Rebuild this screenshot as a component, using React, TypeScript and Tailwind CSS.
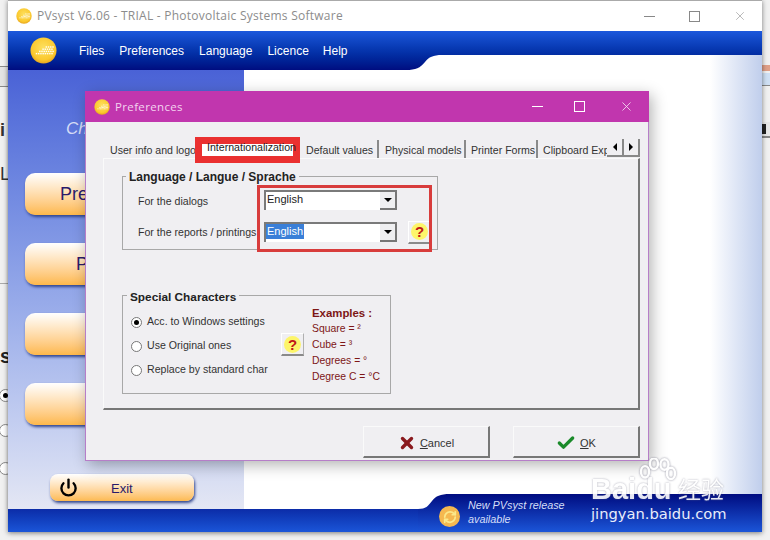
import React from "react";
import { Check, Power, RefreshCw, X } from "lucide-react";

function Logo({ size, id }: { size: number; id: string }) {
  const dots: React.ReactNode[] = [];
  for (let r = 0; r < 4; r++) {
    for (let c = 0; c < 8 - r * 1.5; c++) {
      dots.push(<rect key={`${r}-${c}`} x={6 + c * 2.3 + r * 3.4} y={16.5 - r * 2.3} width="1.5" height="1.5" fill="#fff" opacity="0.95" />);
    }
  }
  return (
    <svg width={size} height={size} viewBox="0 0 28 28" className="shrink-0">
      <defs>
        <radialGradient id={id} cx="0.5" cy="0.4" r="0.65">
          <stop offset="0" stopColor="#fde060" />
          <stop offset="0.7" stopColor="#fbc92e" />
          <stop offset="1" stopColor="#e09a18" />
        </radialGradient>
      </defs>
      <circle cx="14" cy="14" r="13.5" fill={`url(#${id})`} />
      {dots}
    </svg>
  );
}

function Help({ className }: { className: string }) {
  return (
    <div className={`flex items-center justify-center bg-[#f0eff2] border-t border-l border-white border-b-2 border-r border-b-[#8a8a8a] border-r-[#b0b0b0] ${className}`}>
      <div className="w-[17px] h-[17px] rounded-full bg-[#fdf56a] flex items-center justify-center text-[15px] leading-none font-bold text-[#c01818] font-['Liberation_Sans',sans-serif]">?</div>
    </div>
  );
}

function Combo({ selected }: { selected?: boolean }) {
  return (
    <div className="w-[133px] h-[20px] bg-white border-t-2 border-l-2 border-[#7a7a7a] flex">
      <div className="flex-1 flex items-start">
        <span className={`text-[11px] leading-[15px] px-[1px] ${selected ? "bg-[#3a7fd8] text-white" : "text-[#222]"}`}>English</span>
      </div>
      <div className="w-[17px] bg-[#efeff1] border-b-2 border-r-2 border-[#777] flex items-center justify-center">
        <div className="w-0 h-0 border-l-[4px] border-r-[4px] border-t-[4px] border-l-transparent border-r-transparent border-t-black" />
      </div>
    </div>
  );
}

function Radio({ label, on }: { label: string; on?: boolean }) {
  return (
    <div className="flex items-center h-[24px] w-[137px] whitespace-nowrap text-[10.6px] text-[#333]">
      <div className="w-[11px] h-[11px] rounded-full border border-[#777] bg-white flex items-center justify-center mr-[5px] shrink-0">
        {on && <div className="w-[5px] h-[5px] rounded-full bg-black" />}
      </div>
      {label}
    </div>
  );
}

function Big({ label, pad }: { label: string; pad: string }) {
  return (
    <div className={`h-[42px] w-[194px] rounded-[10px] bg-gradient-to-b from-white to-[#fdb84a] shadow-[1px_2px_3px_#31468f] text-[18px] text-[#2a1a6a] ${pad} flex items-center`}>
      {label}
    </div>
  );
}

function Tab({ label, w }: { label: string; w: string }) {
  return (
    <div className={`${w} h-[18px] pt-[3px] shrink-0 flex items-center whitespace-nowrap text-[10.6px] text-[#333]`}>
      {label}
    </div>
  );
}

function DlgBtn({ children }: { children: React.ReactNode }) {
  return (
    <div className="w-[127px] h-[32px] border-t border-l border-[#fafafa] border-b-2 border-r-2 border-b-[#777] border-r-[#777] flex items-center justify-center gap-[4px] text-[11px] text-[#333] pt-[3px]">
      {children}
    </div>
  );
}

export default function App() {
  return (
    <div className="relative w-[770px] h-[540px] overflow-hidden bg-[#f1f1f1] font-['Liberation_Sans',sans-serif]">
      {/* fragments of the windows behind */}
      <div className="absolute left-0 top-[66px] w-[8px] h-[21px] border-y border-[#8a8a8a] bg-[#e4e4e4]" />
      <div className="absolute left-0 top-[117px] text-[18px] font-bold text-[#333]">i</div>
      <div className="absolute left-0 top-[161px] text-[18px] text-[#333]">L</div>
      <div className="absolute left-0 top-[283px] w-[8px] h-px bg-[#aaa]" />
      <div className="absolute left-0 top-[341px] text-[20px] font-bold text-[#222]">s</div>
      <div className="absolute left-[-1px] top-[389px] w-[13px] h-[13px] rounded-full border border-[#888] bg-white flex items-center justify-center"><div className="w-[5px] h-[5px] rounded-full bg-black" /></div>
      <div className="absolute left-[-1px] top-[424px] w-[13px] h-[13px] rounded-full border border-[#888] bg-white" />
      <div className="absolute left-[-1px] top-[462px] w-[13px] h-[13px] rounded-full border border-[#888] bg-white" />
      <div className="absolute right-0 top-[65px] w-[8px] h-[6px] bg-[#e0a088]" />
      <div className="absolute right-0 top-[73px] w-[8px] h-[13px] bg-[#cfe0f4] border-b border-[#888]" />
      <div className="absolute right-0 top-[122px] w-[8px] h-[16px] bg-[#e8e8e8] border-b-2 border-[#888]"><div className="w-[4px] h-[10px] bg-[#222] mt-[2px]" /></div>

      {/* main window */}
      <div className="absolute left-[8px] top-0 w-[754px] h-[532px] flex flex-col bg-white border-t border-[#aaa] shadow-[0_1px_5px_rgba(0,0,0,0.5)]">
        <div className="h-[30px] flex items-center pl-[8px] shrink-0">
          <Logo size={16} id="l1" />
          <span className="ml-[5px] text-[12px] tracking-[0.25px] text-[#8c8c8c] font-['Open_Sans',sans-serif] whitespace-nowrap">PVsyst V6.06 - TRIAL - Photovoltaic Systems Software</span>
          <div className="ml-auto flex items-center gap-[34px] pr-[16px] text-[#888]">
            <div className="w-[11px] h-px bg-[#888]" />
            <div className="w-[11px] h-[11px] border border-[#888]" />
            <X size={14} strokeWidth={1} className="-mx-[1px]" />
          </div>
        </div>
        <div className="relative h-[39px] shrink-0 bg-gradient-to-b from-[#1c58dc] to-[#000c80] flex items-center pl-[22px] text-white text-[12px]">
          <Logo size={27} id="l2" />
          <span className="ml-[22px] mr-[15px]">Files</span>
          <span className="mr-[15px]">Preferences</span>
          <span className="mr-[15px]">Language</span>
          <span className="mr-[14px]">Licence</span>
          <span>Help</span>
          <svg className="absolute right-0 bottom-0" width="356" height="15" viewBox="0 0 356 15" preserveAspectRatio="none">
            <defs>
              <linearGradient id="cut" x1="0" y1="0" x2="1" y2="0">
                <stop offset="0" stopColor="#fff" />
                <stop offset="0.854" stopColor="#fff" />
                <stop offset="1" stopColor="#c0ceec" />
              </linearGradient>
            </defs>
            <path d="M0 15 C10 15 14 13 19 7 C23 2 27 0 36 0 L356 0 L356 15 Z" fill="url(#cut)" />
          </svg>
        </div>
        <div className="flex-1 flex min-h-0">
          <div className="w-[236px] shrink-0 bg-gradient-to-b from-[#4a62d6] to-[#e4e7f4] flex flex-col items-start pl-[17px] shadow-[1px_0_3px_rgba(0,0,0,0.3)]">
            <div className="h-[103px] pl-[41px] pt-[49px] italic text-[17px] text-[#d5dcf6] leading-[20px] whitespace-nowrap">Choose your action</div>
            <div className="flex flex-col gap-[28px]">
              <Big label="Preliminary design" pad="pl-[35px]" />
              <Big label="Project design" pad="pl-[51px]" />
              <Big label="Databases" pad="pl-[60px]" />
              <Big label="Tools" pad="pl-[80px]" />
            </div>
            <div className="ml-[25px] mt-[49px] w-[144px] h-[27px] rounded-[8px] bg-gradient-to-b from-white to-[#fdba50] shadow-[1px_2px_3px_#31468f] flex items-center pl-[9px] text-[13px] text-[#2a1a6a]">
              <Power size={19} strokeWidth={3} className="text-black" />
              <span className="ml-[33px] pt-[2px]">Exit</span>
            </div>
          </div>
          <div className="flex-1 bg-gradient-to-r from-white from-[90%] to-[#c0ceec]" />
        </div>
        <div className="relative h-[23px] shrink-0 bg-gradient-to-b from-[#0c2ca8] to-[#1b55d8]" />
      </div>

      {/* status notch of the bottom bar */}
      <div className="absolute left-[418px] top-[494px] w-[344px] h-[38px] flex items-center">
        <svg className="absolute inset-0" width="344" height="38" viewBox="0 0 344 38">
          <defs>
            <linearGradient id="bb" x1="0" y1="0" x2="0" y2="1">
              <stop offset="0" stopColor="#000c80" />
              <stop offset="1" stopColor="#1b55d8" />
            </linearGradient>
          </defs>
          <path d="M0 15 C8 15 10 12 14 7 C18 2 22 0 32 0 L344 0 L344 38 L0 38 Z" fill="url(#bb)" />
        </svg>
        <div className="relative ml-[21px] mt-[7px] w-[21px] h-[21px] rounded-full bg-[#f5b850] flex items-center justify-center shrink-0">
          <RefreshCw size={14} strokeWidth={3} className="text-[#fbe88a]" />
        </div>
        <div className="relative ml-[8px] -mt-[2px] italic text-[10.8px] leading-[14px] text-[#d5def8]">New PVsyst release<br />available</div>
      </div>

      {/* dialog */}
      <div className="absolute left-[85px] top-[91px] w-[564px] h-[370px] flex flex-col border border-t-0 border-[#b67ec8] shadow-[3px_4px_14px_rgba(0,0,0,0.3)] bg-[#f0eff2]">
        <div className="h-[31px] shrink-0 -mx-px bg-[#c136ae] flex items-center pl-[9px]">
          <Logo size={16} id="l3" />
          <span className="ml-[5px] text-[11.5px] tracking-[0.35px] text-[#f3d3ee] font-['Open_Sans',sans-serif]">Preferences</span>
          <div className="ml-auto flex items-center pr-[15px] text-[#f6e6f4]">
            <div className="w-[11px] h-px bg-white mr-[31px]" />
            <div className="w-[11px] h-[11px] border border-white mr-[34px]" />
            <X size={15} strokeWidth={1.3} />
          </div>
        </div>
        <div className="flex-1 flex flex-col pl-[17px] pr-[8px] min-h-0">
          <div className="relative h-[36px] shrink-0 pt-[18px] pl-[7px] flex">
            <Tab label="User info and logo" w="w-[97px]" />
            <div className="relative w-[97px] h-[18px] shrink-0">
              <div className="absolute left-[-12px] top-[-3px] w-[105px] h-[26px] border-x-[7px] border-y-[7px] border-[#ea3030] bg-white" />
              <div className="absolute left-0 top-[-1px] h-[18px] flex items-center whitespace-nowrap text-[10.6px] text-[#222]">Internationalization</div>
            </div>
            <Tab label="Default values" w="w-[75px] pl-[2px] border-r-2 border-[#8a8a8a]" />
            <Tab label="Physical models" w="w-[87px] pl-[6px] border-r-2 border-[#8a8a8a]" />
            <Tab label="Printer Forms" w="w-[72px] pl-[5px] border-r-2 border-[#8a8a8a]" />
            <Tab label="Clipboard Exp" w="w-[70px] pl-[5px]" />
            <div className="absolute right-0 top-[17px] w-[33px] h-[18px] flex bg-[#f0eff2]">
              <div className="w-[17px] border-b-2 border-r-2 border-[#888] flex items-center justify-center">
                <div className="w-0 h-0 border-y-[4px] border-r-[4px] border-y-transparent border-r-black" />
              </div>
              <div className="w-[16px] border-b-2 border-r-2 border-[#888] flex items-center justify-center">
                <div className="w-0 h-0 border-y-[4px] border-l-[4px] border-y-transparent border-l-black" />
              </div>
            </div>
          </div>
          <div className="h-[252px] shrink-0 border-t border-l border-[#fafafa] border-b-2 border-r-2 border-b-[#777] border-r-[#777] pl-[18px] pt-[17px]">
            <div className="relative w-[316px] h-[74px] border border-[#a8a8a8] pl-[15px] pt-[13px]">
              <div className="absolute left-[3px] top-[-7px] bg-[#f0eff2] px-[3px] text-[12px] leading-[15px] font-bold text-[#222]">Language / Langue / Sprache</div>
              <div className="flex items-center h-[20px] text-[10.6px] text-[#333]">
                <span className="w-[126px] pt-[3px]">For the dialogs</span>
                <Combo />
              </div>
              <div className="flex items-center h-[20px] mt-[12px] text-[10.6px] text-[#333]">
                <span className="w-[126px] pt-[1px] whitespace-nowrap">For the reports / printings</span>
                <Combo selected />
                <Help className="ml-[11px] w-[23px] h-[23px]" />
              </div>
            </div>
            <div className="relative mt-[45px] w-[269px] h-[99px] border border-[#a8a8a8] pl-[8px] pt-[14px] flex">
              <div className="absolute left-[4px] top-[-6px] bg-[#f0eff2] px-[3px] text-[11.8px] leading-[15px] font-bold text-[#222]">Special Characters</div>
              <div className="flex flex-col"><Radio label="Acc. to Windows settings" on /><Radio label="Use Original ones" /><Radio label="Replace by standard char" /></div>
              <Help className="mt-[23px] ml-[13px] w-[23px] h-[23px]" />
              <div className="ml-[8px] -mt-[5px] text-[10.4px] leading-[16px] text-[#7d1616]">
                <div className="font-bold text-[11.4px]">Examples :</div>
                <div>Square = ²</div>
                <div>Cube = ³</div>
                <div>Degrees = °</div>
                <div className="whitespace-nowrap">Degree C = °C</div>
              </div>
            </div>
          </div>
          <div className="flex justify-end gap-[23px] mt-[16px]">
            <DlgBtn>
              <X size={18} strokeWidth={4.5} className="text-[#8a1a1e]" />
              <span><u>C</u>ancel</span>
            </DlgBtn>
            <DlgBtn>
              <Check size={20} strokeWidth={4} className="text-[#1a8a2a]" />
              <span><u>O</u>K</span>
            </DlgBtn>
          </div>
        </div>
      </div>

      {/* annotation rectangle */}
      <div className="absolute left-[257px] top-[185px] w-[175px] h-[67px] border-[3px] border-[#d83c3c]" />

      {/* watermark */}
      <div className="absolute left-[591px] top-[457px] w-[140px] h-[70px] text-white">
        <div className="absolute left-0 top-[15px] text-[29px] leading-[34px] font-bold opacity-90 [text-shadow:0_0_2px_rgba(110,110,130,0.7)]">Baidu</div>
        <svg className="absolute left-[46px] top-[1px] opacity-90 drop-shadow-[0_0_1px_rgba(110,110,130,0.8)]" width="42" height="34" viewBox="0 0 50 42">
          <ellipse cx="9" cy="17" rx="5" ry="7" fill="none" stroke="#fff" strokeWidth="3" />
          <ellipse cx="20" cy="7" rx="5" ry="6.5" fill="none" stroke="#fff" strokeWidth="3" />
          <ellipse cx="33" cy="8" rx="5" ry="6.5" fill="none" stroke="#fff" strokeWidth="3" />
          <ellipse cx="41" cy="19" rx="5" ry="7" fill="none" stroke="#fff" strokeWidth="3" />
        </svg>
        <div className="absolute left-[87px] top-[18px] text-[23px] leading-[26px] opacity-90 font-['Noto_Sans_CJK_SC',sans-serif] whitespace-nowrap [text-shadow:0_0_2px_rgba(110,110,130,0.7)]">经验</div>
        <div className="absolute left-0 top-[46px] text-[14.7px] leading-[22px] text-[#e8ecfa] font-['DejaVu_Sans',sans-serif] whitespace-nowrap">jingyan.baidu.com</div>
      </div>
    </div>
  );
}
